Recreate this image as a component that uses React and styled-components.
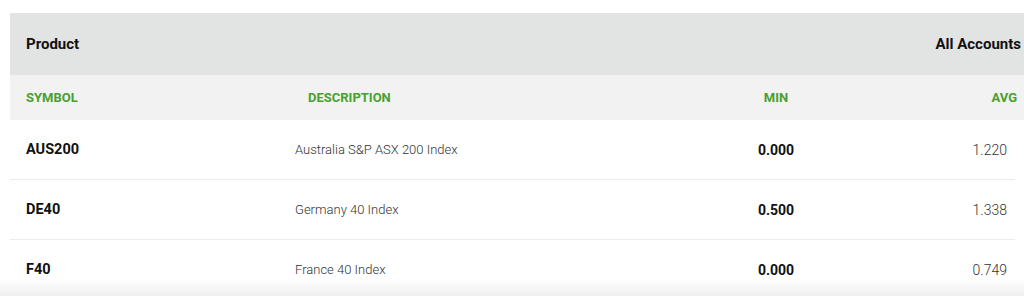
import React from 'react';
import styled, { createGlobalStyle } from 'styled-components';

const GlobalStyle = createGlobalStyle`
  html, body {
    margin: 0;
    padding: 0;
    background: #fff;
    overflow: hidden;
  }
  body {
    font-family: Roboto, "Liberation Sans", Arial, sans-serif;
    color: #111;
  }
`;

const Page = styled.div`
  position: relative;
  width: 1024px;
  height: 296px;
  padding: 13px 0 0 10px;
  box-sizing: border-box;
  overflow: hidden;

  &::after {
    content: '';
    position: absolute;
    left: 0;
    right: 0;
    bottom: 0;
    height: 18px;
    background: linear-gradient(to bottom, rgba(0, 0, 0, 0), rgba(0, 0, 0, 0.06));
    pointer-events: none;
  }
`;

const Table = styled.div`
  display: flex;
  flex-direction: column;
`;

const TitleBar = styled.div`
  display: flex;
  justify-content: space-between;
  align-items: center;
  height: 62px;
  padding: 0 3px 0 16px;
  background: #e2e3e3;
  font-size: 15px;
  font-weight: 700;
  color: #111;
`;

const Grid = styled.div`
  display: grid;
  grid-template-columns: 269px 421px 120px 1fr;
  align-items: center;
  box-sizing: border-box;
`;

const HeadRow = styled(Grid)`
  height: 45px;
  padding: 0 7px 0 16px;
  background: #f2f2f2;
  color: #48a02f;
  font-size: 13px;
  font-weight: 700;
  text-transform: uppercase;
`;

const Row = styled(Grid)`
  height: 60px;
  margin-right: 9px;
  padding: 0 8px 0 16px;
  border-bottom: 1px solid #ececec;
  font-size: 14px;
`;

const Cell = styled.div`
  text-align: ${(p) => p.align || 'left'};
  padding-left: ${(p) => p.indent || 0}px;
  font-weight: ${(p) => p.weight || 'inherit'};
  color: ${(p) => p.color || 'inherit'};
  font-size: ${(p) => p.size || 'inherit'};
  white-space: nowrap;
`;

const products = [
  { symbol: 'AUS200', description: 'Australia S&P ASX 200 Index', min: '0.000', avg: '1.220' },
  { symbol: 'DE40', description: 'Germany 40 Index', min: '0.500', avg: '1.338' },
  { symbol: 'F40', description: 'France 40 Index', min: '0.000', avg: '0.749' },
];

export default function App() {
  return (
    <>
      <GlobalStyle />
      <Page>
        <Table>
          <TitleBar>
            <span>Product</span>
            <span>All Accounts</span>
          </TitleBar>
          <HeadRow>
            <Cell>Symbol</Cell>
            <Cell indent={13}>Description</Cell>
            <Cell align="center">Min</Cell>
            <Cell align="right">Avg</Cell>
          </HeadRow>
          {products.map((item) => (
            <Row key={item.symbol}>
              <Cell weight={700} size="14.5px">{item.symbol}</Cell>
              <Cell weight={300} color="#333" size="13px">{item.description}</Cell>
              <Cell align="center" weight={700}>{item.min}</Cell>
              <Cell align="right" weight={300} color="#333">{item.avg}</Cell>
            </Row>
          ))}
        </Table>
      </Page>
    </>
  );
}
